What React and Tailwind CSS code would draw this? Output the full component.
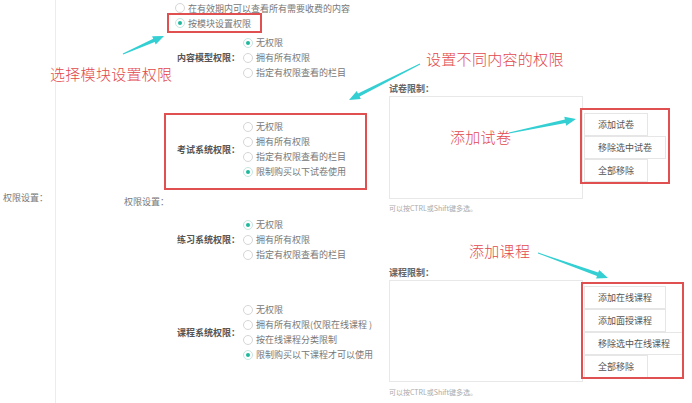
import React from 'react';

const FONT = { fontFamily: '"Noto Sans CJK SC", "Noto Sans", sans-serif' };

// 单选项
const Radio = ({ label, checked = false }) => (
  <div className="flex items-center h-[15px] whitespace-nowrap">
    <span
      className={`w-[10px] h-[10px] rounded-full border bg-white flex items-center justify-center shrink-0 ${
        checked ? 'border-[#c4e6df]' : 'border-[#d6d6d6]'
      }`}
    >
      {checked && <span className="w-[4px] h-[4px] rounded-full bg-[#1fb89c]" />}
    </span>
    <span className="ml-[3px] text-[9px] leading-none text-[#777]">{label}</span>
  </div>
);

// 标签 + 单选组
const Group = ({ label, options, checkedIndex, labelWidth = 'w-[184px]' }) => (
  <div className="flex items-center">
    <div className={`${labelWidth} shrink-0 text-right text-[9px] leading-none font-bold text-[#555] whitespace-nowrap`}>
      {label}：
    </div>
    <div className="ml-[3px] flex flex-col">
      {options.map((o, i) => (
        <Radio key={o} label={o} checked={i === checkedIndex} />
      ))}
    </div>
  </div>
);

const Btn = ({ children }) => (
  <div className="h-[23px] px-[13px] border border-[#e6e6e6] bg-white flex items-center text-[9px] leading-none text-[#555] whitespace-nowrap">
    {children}
  </div>
);

// 右侧选择框 + 按钮
const Picker = ({ label, height, buttons, btnTop, box }) => (
  <div className="flex flex-col">
    <div className="h-[15px] flex items-center text-[9px] leading-none font-bold text-[#666]">{label}：</div>
    <div className="flex items-start">
      <div className={`w-[194px] ${height} border border-[#e8e8e8] bg-white`} />
      <div className={`relative ml-[1px] ${btnTop} flex flex-col items-start`}>
        {buttons.map((b) => (
          <Btn key={b}>{b}</Btn>
        ))}
        <div className={`absolute pointer-events-none border-2 border-[#e05050] ${box}`} />
      </div>
    </div>
  </div>
);

const Hint = ({ className }) => (
  <div className={`h-[15px] flex items-center text-[7px] leading-none text-[#aaa] ${className}`}>
    可以按CTRL或Shift键多选。
  </div>
);

// 标注箭头：细尾渐宽 + 三角箭头
const Arrow = ({ x1, y1, x2, y2 }) => {
  const dx = x2 - x1;
  const dy = y2 - y1;
  const len = Math.hypot(dx, dy);
  const ux = dx / len;
  const uy = dy / len;
  const nx = -uy;
  const ny = ux;
  const hl = 11;
  const bx = x2 - ux * hl;
  const by = y2 - uy * hl;
  const p = (x, y) => `${x.toFixed(1)},${y.toFixed(1)}`;
  const pts = [
    p(x1 + nx * 0.4, y1 + ny * 0.4),
    p(bx + nx * 1.8, by + ny * 1.8),
    p(bx + nx * 4.5, by + ny * 4.5),
    p(x2, y2),
    p(bx - nx * 4.5, by - ny * 4.5),
    p(bx - nx * 1.8, by - ny * 1.8),
    p(x1 - nx * 0.4, y1 - ny * 0.4),
  ].join(' ');
  return <polygon points={pts} fill="#33cfd2" />;
};

const Note = ({ className, children }) => (
  <div className={`absolute text-[15px] leading-none font-light text-[#e2484c] whitespace-nowrap tracking-[0.3px] ${className}`}>
    {children}
  </div>
);

export default function App() {
  return (
    <div className="relative w-[692px] h-[403px] overflow-hidden bg-white flex" style={FONT}>
      {/* 左侧标签 */}
      <div className="w-[56px] shrink-0 border-r border-[#ececec] pt-[190px] pl-[3px]">
        <div className="h-[15px] flex items-center text-[9px] leading-none text-[#777] whitespace-nowrap">权限设置：</div>
      </div>

      {/* 权限选项 */}
      <div className="w-[333px] shrink-0 flex flex-col">
        <div className="pl-[119px] h-[16px] flex items-center">
          <Radio label="在有效期内可以查看所有需要收费的内容" />
        </div>
        <div className="ml-[111px] -mt-[3px] h-[20px] w-[95px] border-2 border-[#e05050] pl-[6px] flex items-center">
          <Radio label="按模块设置权限" checked />
        </div>

        <div className="mt-[2px]">
          <Group label="内容模型权限" options={['无权限', '拥有所有权限', '指定有权限查看的栏目']} checkedIndex={0} />
        </div>

        <div className="mt-[33px] ml-[108px] w-[203px] h-[77px] border-2 border-[#e05050] pt-[4px]">
          <Group
            label="考试系统权限"
            labelWidth="w-[74px]"
            options={['无权限', '拥有所有权限', '指定有权限查看的栏目', '限制购买以下试卷使用']}
            checkedIndex={3}
          />
        </div>

        <div className="mt-[4px] pl-[68px] h-[15px] flex items-center text-[9px] leading-none text-[#777]">权限设置：</div>

        <div className="mt-[8px]">
          <Group label="练习系统权限" options={['无权限', '拥有所有权限', '指定有权限查看的栏目']} checkedIndex={0} />
        </div>

        <div className="mt-[40px]">
          <Group
            label="课程系统权限"
            options={['无权限', '拥有所有权限(仅限在线课程 )', '按在线课程分类限制', '限制购买以下课程才可以使用']}
            checkedIndex={3}
          />
        </div>
      </div>

      {/* 右侧限制 */}
      <div className="flex flex-col">
        <div className="mt-[81px]">
          <Picker
            label="试卷限制"
            height="h-[103px]"
            btnTop="mt-[17px]"
            buttons={['添加试卷', '移除选中试卷', '全部移除']}
            box="-left-[4px] -top-[5px] w-[90px] h-[76px]"
          />
        </div>
        <Hint className="mt-[2px]" />

        <div className="mt-[49px]">
          <Picker
            label="课程限制"
            height="h-[102px]"
            btnTop="mt-[6px]"
            buttons={['添加在线课程', '添加面授课程', '移除选中在线课程', '全部移除']}
            box="-left-[3px] -top-[4px] w-[103px] h-[97px]"
          />
        </div>
        <Hint className="mt-[3px]" />
      </div>

      {/* 标注 */}
      <Note className="left-[50px] top-[66px]">选择模块设置权限</Note>
      <Note className="left-[426px] top-[51px]">设置不同内容的权限</Note>
      <Note className="left-[450px] top-[129px]">添加试卷</Note>
      <Note className="left-[469px] top-[243px]">添加课程</Note>

      <svg className="absolute inset-0 pointer-events-none" width="692" height="403">
        <Arrow x1={123} y1={54} x2={164} y2={36} />
        <Arrow x1={420} y1={64} x2={349} y2={100} />
        <Arrow x1={509} y1={133} x2={576} y2={119} />
        <Arrow x1={538} y1={253} x2={608} y2={278} />
      </svg>
    </div>
  );
}
